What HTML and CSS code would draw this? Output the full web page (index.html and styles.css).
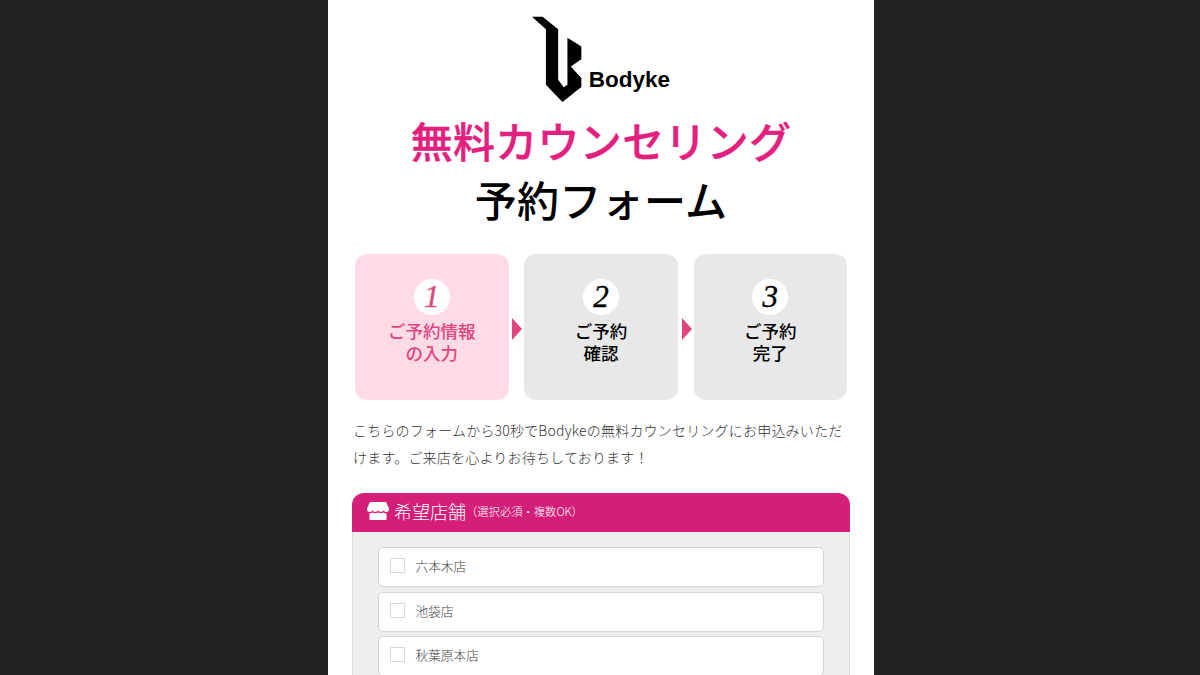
FILE: index.html
```html
<!DOCTYPE html>
<html lang="ja">
<head>
    <meta charset="UTF-8">
    <title>無料カウンセリング予約フォーム</title>
    <link rel="stylesheet" href="styles.css">
</head>
<body>
    <div class="container">
        <div class="logo">
            <svg class="logo-mark" width="53" height="88" viewBox="90 45 160 265">
                <path d="M96 50H128L175 88V240L192 263L203 255V113L245 140V178L213 200L245 235V262L188 307L138 255V88Z" fill="#000"/>
            </svg>
            <span class="logo-name">Bodyke</span>
        </div>

        <h1 class="title">
            <span class="title-pink">無料カウンセリング</span>
            <span class="title-black">予約フォーム</span>
        </h1>

        <div class="steps">
            <div class="step step-active">
                <span class="step-num">1</span>
                <p>ご予約情報<br>の入力</p>
            </div>
            <div class="step">
                <span class="step-num">2</span>
                <p>ご予約<br>確認</p>
            </div>
            <div class="step">
                <span class="step-num">3</span>
                <p>ご予約<br>完了</p>
            </div>
        </div>

        <p class="lead">こちらのフォームから30秒でBodykeの無料カウンセリングにお申込みいただけます。ご来店を心よりお待ちしております！</p>

        <div class="panel">
            <div class="panel-head">
                <svg class="shop-icon" width="22" height="18" viewBox="0 0 22 18">
                    <path d="M4 0H18C18.800 0 19.300 .4 19.600 1L22 6.500V7.500C22 8.800 21 10 19.300 10C18 10 17 9.300 16.500 8.300C16 9.300 15 10 13.800 10C12.600 10 11.500 9.300 11 8.300C10.500 9.300 9.400 10 8.200 10C7 10 6 9.300 5.500 8.300C5 9.300 4 10 2.700 10C1 10 0 8.800 0 7.500V6.500L2.400 1C2.700 .4 3.200 0 4 0Z" fill="#fff"/>
                    <path d="M2.500 11.200C3.700 11.500 4.800 11.200 5.500 10.600C6.900 11.600 9 11.600 11 10.600C13 11.600 15.100 11.600 16.500 10.600C17.200 11.200 18.300 11.500 19.500 11.200V17C19.500 17.600 19.100 18 18.500 18H3.500C2.900 18 2.500 17.600 2.500 17Z" fill="#fff"/>
                </svg>
                <span class="panel-title">希望店舗</span>
                <span class="panel-note">（選択必須・複数OK）</span>
            </div>
            <div class="panel-body">
                <label class="option"><span class="check"></span>六本木店</label>
                <label class="option"><span class="check"></span>池袋店</label>
                <label class="option"><span class="check"></span>秋葉原本店</label>
            </div>
        </div>
    </div>
</body>
</html>
```

FILE: styles.css
```css
html, body {
    height: 675px;
    overflow: hidden;
}
body {
    margin: 0;
    background: #222222;
    font-family: "Noto Sans CJK JP", "Noto Sans", sans-serif;
}
.container {
    width: 546px;
    height: 675px;
    margin-left: 328px;
    background: #fff;
    overflow: hidden;
    box-sizing: border-box;
    padding: 15px 24px 0;
}
.logo {
    display: flex;
    align-items: flex-end;
    justify-content: center;
    height: 88px;
    padding-right: 2px;
}
.logo-mark {
    display: block;
    margin-right: 6px;
}
.logo-name {
    font-family: "Liberation Sans", Arial, sans-serif;
    font-weight: bold;
    font-size: 22.500px;
    line-height: 26px;
    margin-bottom: 10px;
    color: #000;
}
.title {
    margin: 7px 0 0;
    text-align: center;
    font-size: 42px;
    font-weight: 500;
    line-height: 59px;
    letter-spacing: .3px;
}
.title span {
    display: block;
}
.title-pink {
    color: #e4207f;
    -webkit-text-stroke: .4px #e4207f;
}
.title-black {
    color: #000;
}
.steps {
    display: flex;
    justify-content: space-between;
    margin: 26px 3px 0;
}
.step {
    position: relative;
    width: 153.500px;
    height: 146px;
    background: #e8e8e8;
    border-radius: 12px;
    text-align: center;
    padding-top: 25px;
    box-sizing: border-box;
}
.step-active {
    background: #ffdce5;
    color: #e0457f;
}
.step + .step::before {
    content: "";
    position: absolute;
    left: -12px;
    top: 64px;
    border-left: 10px solid #e0457f;
    border-top: 11px solid transparent;
    border-bottom: 11px solid transparent;
}
.step-num {
    display: block;
    width: 36px;
    height: 36px;
    margin: 0 auto;
    border-radius: 50%;
    background: #fff;
    font-family: "Liberation Serif", serif;
    font-style: italic;
    font-size: 31px;
    line-height: 36px;
    color: #000;
    -webkit-text-stroke: .4px currentColor;
}
.step-active .step-num {
    color: #dd4a80;
}
.step p {
    margin: 5px 0 0;
    font-size: 17.500px;
    font-weight: 500;
    line-height: 22px;
}
.lead {
    margin: 17px 1px 0;
    font-size: 14px;
    font-weight: 300;
    line-height: 26.500px;
    color: #333;
    letter-spacing: .2px;
}
.panel {
    margin-top: 23px;
}
.panel-head {
    display: flex;
    align-items: center;
    height: 39px;
    box-sizing: border-box;
    background: #d31f77;
    border-radius: 12px 12px 0 0;
    padding: 0 0 3px 15px;
    color: #fff;
}
.shop-icon {
    display: block;
    margin-right: 5px;
}
.panel-title {
    font-size: 18px;
    font-weight: 300;
}
.panel-note {
    font-size: 11.300px;
    font-weight: 300;
}
.panel-body {
    background: #eeeeee;
    border: 1px solid #dddddd;
    border-top: none;
    padding: 15px 25px 20px;
    display: flex;
    flex-direction: column;
    gap: 4.500px;
}
.option {
    display: flex;
    align-items: center;
    height: 40px;
    box-sizing: border-box;
    background: #fff;
    border: 1px solid #d5d5d5;
    border-radius: 5px;
    padding: 0 0 3px 11px;
    font-size: 12.700px;
    font-weight: 300;
    color: #444;
}
.check {
    width: 15px;
    height: 15px;
    box-sizing: border-box;
    border: 1px solid #d9d9d9;
    margin-right: 10.500px;
}
```
